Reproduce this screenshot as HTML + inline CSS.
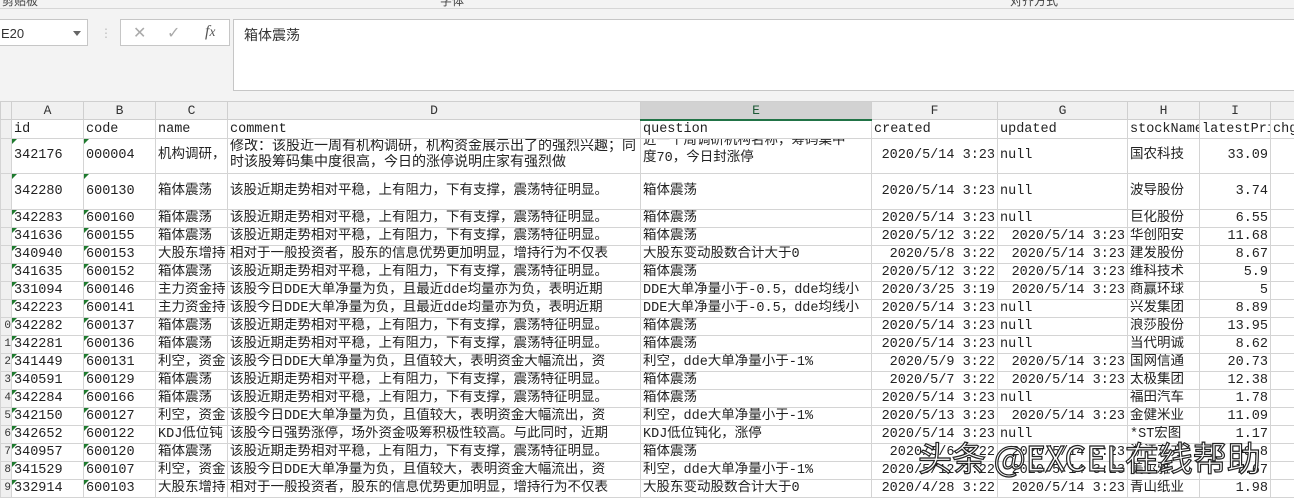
<!DOCTYPE html>
<html><head><meta charset="utf-8"><style>
*{margin:0;padding:0;box-sizing:border-box}
body{width:1294px;height:487px;overflow:hidden;background:#fff;position:relative;font-family:"Liberation Mono","Noto Sans CJK SC",monospace;font-size:13.5px;color:#222}
.rib{position:absolute;left:0;top:0;width:1294px;height:9px;background:#f3f3f3;border-bottom:1px solid #d6d6d6;overflow:hidden}
.rib span{position:absolute;top:-8px;font:12px "Noto Sans CJK SC",sans-serif;color:#444}
.fb{position:absolute;left:0;top:9px;width:1294px;height:92px;background:#f3f3f3}
.nb{position:absolute;left:-2px;top:19px;width:90px;height:27px;background:#fff;border:1px solid #c6c6c6;font:13px "Liberation Sans",sans-serif;padding:6px 0 0 2px;color:#333}
.nb b{position:absolute;right:6px;top:11px;border:4px solid transparent;border-top:5px solid #666}
.ic{position:absolute;left:120px;top:19px;width:110px;height:27px;background:#fff;border:1px solid #c6c6c6;color:#aaa;font:16px "Liberation Sans",sans-serif}
.fx{position:absolute;left:233px;top:19px;width:1070px;height:72px;background:#fff;border:1px solid #c6c6c6;font:14px "Liberation Sans","Noto Sans CJK SC",sans-serif;padding:5px 10px;color:#333}
table{position:absolute;left:0;top:101px;border-collapse:collapse;table-layout:fixed;width:1300px}
td{border:1px solid #d4d4d4;height:18px;white-space:nowrap;overflow:hidden;padding:0 2px;line-height:17px;position:relative;vertical-align:bottom}
tr.h td{background:#f0f0f0;text-align:center;color:#333;border-color:#cfcfcf;font-size:13px;line-height:16px}
tr.h td.sel{background:#d2d2d2;border-bottom:2px solid #217346;color:#1d5a36}
tr.tall td{vertical-align:middle}
td.r{text-align:right}
td.t:before{content:"";position:absolute;left:0;top:0;border-top:5px solid #1e7a2e;border-right:5px solid transparent}
td.rh{background:#f0f0f0;font-size:11px;padding:0;text-align:right;color:#333}
.wm{position:absolute;left:918px;top:432px;font:34px "Noto Sans CJK SC","Liberation Sans",sans-serif;color:#fff;-webkit-text-stroke:1.2px #222;white-space:nowrap}
</style></head><body>
<div class="rib"><span style="left:2px">剪贴板</span><span style="left:440px">字体</span><span style="left:1010px">对齐方式</span></div>
<div class="fb"></div>
<div class="nb">E20<b></b></div>
<div style="position:absolute;left:100px;top:26px;color:#bbb;font-size:12px">⋮</div>
<div class="ic"><span style="position:absolute;left:12px;top:3px">✕</span><span style="position:absolute;left:46px;top:3px">✓</span><span style="position:absolute;left:84px;top:3px;font-style:italic;font-family:'Liberation Serif';color:#555">f<small>x</small></span></div>
<div class="fx">箱体震荡</div>
<table>
<colgroup><col style="width:11px"><col style="width:72px"><col style="width:72px"><col style="width:72px"><col style="width:413px"><col style="width:231px"><col style="width:126px"><col style="width:130px"><col style="width:72px"><col style="width:71px"><col style="width:30px"></colgroup>
<tr class="h"><td style="height:18px"></td><td>A</td><td>B</td><td>C</td><td>D</td><td class="sel">E</td><td>F</td><td>G</td><td>H</td><td>I</td><td></td></tr>
<tr><td class="rh"></td><td>id</td><td>code</td><td>name</td><td>comment</td><td>question</td><td>created</td><td>updated</td><td>stockName</td><td>latestPrice</td><td>chg</td></tr>
<tr class="tall"><td class="rh" style="height:35px"></td><td class="t">342176</td><td class="t">000004</td><td>机构调研，</td><td style="white-space:normal;line-height:16px;font-size:14px;vertical-align:top"><div style="height:33px;overflow:hidden">修改：该股近一周有机构调研，机构资金展示出了的强烈兴趣；同时该股筹码集中度很高，今日的涨停说明庄家有强烈做</div></td><td><div style="height:33px;overflow:hidden;line-height:17px;white-space:normal"><div style="margin-top:-6px">近一个周调研机构名称，筹码集中<br>度70，今日封涨停</div></div></td><td class="r">2020/5/14 3:23</td><td>null</td><td>国农科技</td><td class="r">33.09</td><td></td></tr>
<tr class="tall"><td class="rh" style="height:36px"></td><td class="t">342280</td><td class="t">600130</td><td>箱体震荡</td><td>该股近期走势相对平稳，上有阻力，下有支撑，震荡特征明显。</td><td>箱体震荡</td><td class="r">2020/5/14 3:23</td><td>null</td><td>波导股份</td><td class="r">3.74</td><td></td></tr>
<tr><td class="rh"></td><td class="t">342283</td><td class="t">600160</td><td>箱体震荡</td><td>该股近期走势相对平稳，上有阻力，下有支撑，震荡特征明显。</td><td>箱体震荡</td><td class="r">2020/5/14 3:23</td><td>null</td><td>巨化股份</td><td class="r">6.55</td><td></td></tr>
<tr><td class="rh"></td><td class="t">341636</td><td class="t">600155</td><td>箱体震荡</td><td>该股近期走势相对平稳，上有阻力，下有支撑，震荡特征明显。</td><td>箱体震荡</td><td class="r">2020/5/12 3:22</td><td class="r">2020/5/14 3:23</td><td>华创阳安</td><td class="r">11.68</td><td></td></tr>
<tr><td class="rh"></td><td class="t">340940</td><td class="t">600153</td><td>大股东增持</td><td>相对于一般投资者，股东的信息优势更加明显，增持行为不仅表</td><td>大股东变动股数合计大于0</td><td class="r">2020/5/8 3:22</td><td class="r">2020/5/14 3:23</td><td>建发股份</td><td class="r">8.67</td><td></td></tr>
<tr><td class="rh"></td><td class="t">341635</td><td class="t">600152</td><td>箱体震荡</td><td>该股近期走势相对平稳，上有阻力，下有支撑，震荡特征明显。</td><td>箱体震荡</td><td class="r">2020/5/12 3:22</td><td class="r">2020/5/14 3:23</td><td>维科技术</td><td class="r">5.9</td><td></td></tr>
<tr><td class="rh"></td><td class="t">331094</td><td class="t">600146</td><td>主力资金持</td><td>该股今日DDE大单净量为负，且最近dde均量亦为负，表明近期</td><td>DDE大单净量小于-0.5，dde均线小</td><td class="r">2020/3/25 3:19</td><td class="r">2020/5/14 3:23</td><td>商赢环球</td><td class="r">5</td><td></td></tr>
<tr><td class="rh"></td><td class="t">342223</td><td class="t">600141</td><td>主力资金持</td><td>该股今日DDE大单净量为负，且最近dde均量亦为负，表明近期</td><td>DDE大单净量小于-0.5，dde均线小</td><td class="r">2020/5/14 3:23</td><td>null</td><td>兴发集团</td><td class="r">8.89</td><td></td></tr>
<tr><td class="rh">0</td><td class="t">342282</td><td class="t">600137</td><td>箱体震荡</td><td>该股近期走势相对平稳，上有阻力，下有支撑，震荡特征明显。</td><td>箱体震荡</td><td class="r">2020/5/14 3:23</td><td>null</td><td>浪莎股份</td><td class="r">13.95</td><td></td></tr>
<tr><td class="rh">1</td><td class="t">342281</td><td class="t">600136</td><td>箱体震荡</td><td>该股近期走势相对平稳，上有阻力，下有支撑，震荡特征明显。</td><td>箱体震荡</td><td class="r">2020/5/14 3:23</td><td>null</td><td>当代明诚</td><td class="r">8.62</td><td></td></tr>
<tr><td class="rh">2</td><td class="t">341449</td><td class="t">600131</td><td>利空，资金</td><td>该股今日DDE大单净量为负，且值较大，表明资金大幅流出，资</td><td>利空，dde大单净量小于-1%</td><td class="r">2020/5/9 3:22</td><td class="r">2020/5/14 3:23</td><td>国网信通</td><td class="r">20.73</td><td></td></tr>
<tr><td class="rh">3</td><td class="t">340591</td><td class="t">600129</td><td>箱体震荡</td><td>该股近期走势相对平稳，上有阻力，下有支撑，震荡特征明显。</td><td>箱体震荡</td><td class="r">2020/5/7 3:22</td><td class="r">2020/5/14 3:23</td><td>太极集团</td><td class="r">12.38</td><td></td></tr>
<tr><td class="rh">4</td><td class="t">342284</td><td class="t">600166</td><td>箱体震荡</td><td>该股近期走势相对平稳，上有阻力，下有支撑，震荡特征明显。</td><td>箱体震荡</td><td class="r">2020/5/14 3:23</td><td>null</td><td>福田汽车</td><td class="r">1.78</td><td></td></tr>
<tr><td class="rh">5</td><td class="t">342150</td><td class="t">600127</td><td>利空，资金</td><td>该股今日DDE大单净量为负，且值较大，表明资金大幅流出，资</td><td>利空，dde大单净量小于-1%</td><td class="r">2020/5/13 3:23</td><td class="r">2020/5/14 3:23</td><td>金健米业</td><td class="r">11.09</td><td></td></tr>
<tr><td class="rh">6</td><td class="t">342652</td><td class="t">600122</td><td>KDJ低位钝</td><td>该股今日强势涨停，场外资金吸筹积极性较高。与此同时，近期</td><td>KDJ低位钝化，涨停</td><td class="r">2020/5/14 3:23</td><td>null</td><td>*ST宏图</td><td class="r">1.17</td><td></td></tr>
<tr><td class="rh">7</td><td class="t">340957</td><td class="t">600120</td><td>箱体震荡</td><td>该股近期走势相对平稳，上有阻力，下有支撑，震荡特征明显。</td><td>箱体震荡</td><td class="r">2020/5/6 3:22</td><td class="r">2020/5/14 3:23</td><td>浙江东方</td><td class="r">9.8</td><td></td></tr>
<tr><td class="rh">8</td><td class="t">341529</td><td class="t">600107</td><td>利空，资金</td><td>该股今日DDE大单净量为负，且值较大，表明资金大幅流出，资</td><td>利空，dde大单净量小于-1%</td><td class="r">2020/5/12 3:22</td><td class="r">2020/5/14 3:23</td><td>美尔雅</td><td class="r">7.67</td><td></td></tr>
<tr><td class="rh">9</td><td class="t">332914</td><td class="t">600103</td><td>大股东增持</td><td>相对于一般投资者，股东的信息优势更加明显，增持行为不仅表</td><td>大股东变动股数合计大于0</td><td class="r">2020/4/28 3:22</td><td class="r">2020/5/14 3:23</td><td>青山纸业</td><td class="r">1.98</td><td></td></tr>
</table>
<div class="wm">头条 @EXCEL在线帮助</div>
</body></html>
